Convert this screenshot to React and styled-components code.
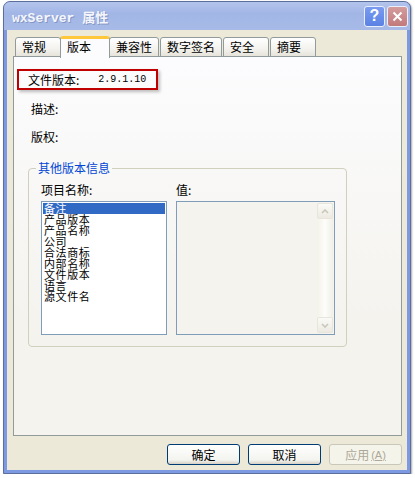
import React from 'react'
import styled, { createGlobalStyle } from 'styled-components'

const Global = createGlobalStyle`
  body {
    margin: 0;
    background: #ffffff;
    font-family: "Noto Sans CJK SC", "Liberation Sans", sans-serif;
    font-size: 12px;
  }
`

const Janela = styled.div`
  box-sizing: border-box;
  margin: 1px 0 0 3px;
  width: 408px;
  height: 473px;
  display: flex;
  flex-direction: column;
  background: #7d99e1;
  border: 1px solid #5c6f9c;
  border-radius: 7px 7px 0 0;
  padding: 0 3px 3px 3px;
  box-shadow: 1px 1px 2px rgba(0, 0, 0, 0.35);
`

const BarraTitulo = styled.div`
  height: 28px;
  display: flex;
  align-items: center;
  background: linear-gradient(#b3c4ec, #a2b6e6 40%, #a7bae7);
  border-radius: 6px 6px 0 0;
  margin: 0 -3px;
  padding-left: 8px;
  padding-right: 2px;
`

const Titulo = styled.div`
  flex-grow: 1;
  color: #f4f6fc;
  font-family: "Liberation Mono", "Noto Sans CJK SC", monospace;
  font-weight: bold;
  font-size: 13px;
  text-shadow: 1px 1px 0 #8496c4;
`

const BotaoTitulo = styled.div`
  box-sizing: border-box;
  width: 21px;
  height: 21px;
  margin-left: 2px;
  border: 1px solid #e8eefc;
  border-radius: 3px;
  display: flex;
  align-items: center;
  justify-content: center;
  color: #fff;
  font-family: "Liberation Sans", sans-serif;
  font-weight: bold;
  font-size: 16px;
  background: ${p => p.fechar
    ? 'linear-gradient(#d49c9c, #c27a7c)'
    : 'linear-gradient(#7a9bf0, #5a82e4)'};
`

const Corpo = styled.div`
  flex-grow: 1;
  background: #ece9d8;
  display: flex;
  flex-direction: column;
  padding: 6px 5px 0 6px;
`

const LinhaAbas = styled.div`
  display: flex;
  align-items: flex-end;
  height: 21px;
  padding-left: 2px;
  position: relative;
  z-index: 2;
`

const Aba = styled.div`
  box-sizing: border-box;
  min-width: ${p => (p.ativa ? '50px' : '46px')};
  padding: 0 6px;
  height: ${p => (p.ativa ? '22px' : '20px')};
  margin: ${p => (p.ativa ? '0 -1px 0 -2px' : '0 1px 0 0')};
  margin-bottom: ${p => (p.ativa ? '-1px' : '0')};
  border: 1px solid #919b9c;
  border-bottom: ${p => (p.ativa ? 'none' : '1px solid #919b9c')};
  border-top: ${p => (p.ativa ? '3px solid #ffc83c' : '1px solid #919b9c')};
  border-radius: 3px 3px 0 0;
  background: ${p => (p.ativa ? '#fcfcfe' : 'linear-gradient(#ffffff, #f3f2ee 60%, #e6e4da)')};
  color: #000;
  line-height: ${p => (p.ativa ? '16px' : '17px')};
  text-align: left;
  position: relative;
  z-index: ${p => (p.ativa ? 3 : 1)};
`

const Painel = styled.div`
  box-sizing: border-box;
  height: 380px;
  border: 1px solid #919b9c;
  background: linear-gradient(#fcfcfe, #f4f3ee 70%);
  padding: 12px 0 0 3px;
  display: flex;
  flex-direction: column;
  margin-top: -1px;
`

const CaixaVermelha = styled.div`
  box-sizing: border-box;
  width: 141px;
  height: 21px;
  border: 2px solid #c00000;
  box-shadow: 2px 2px 3px rgba(0, 0, 0, 0.25);
  display: flex;
  align-items: center;
  padding-left: 9px;
`

const Valor = styled.span`
  font-family: "Liberation Mono", monospace;
  font-size: 10px;
  margin-left: 19px;
`

const Rotulo = styled.div`
  margin-left: 14px;
  margin-top: ${p => p.topo}px;
  line-height: 14px;
`

const Grupo = styled.fieldset`
  box-sizing: border-box;
  margin: 17px 0 0 11px;
  width: 318px;
  height: 186px;
  border: 1px solid #d0d0bf;
  border-radius: 4px;
  padding: 0 11px 11px 12px;
  display: flex;
  flex-direction: column;
`

const Legenda = styled.legend`
  color: #0046d5;
  padding: 0 2px;
  margin-left: -5px;
  line-height: 14px;
`

const Cabecalhos = styled.div`
  display: flex;
  gap: 9px;
  margin-top: 8px;
  line-height: 14px;
`

const Cabecalho = styled.div`
  width: ${p => p.largura}px;
`

const Listas = styled.div`
  display: flex;
  gap: 9px;
  margin-top: 4px;
`

const Lista = styled.div`
  box-sizing: border-box;
  width: 126px;
  height: 134px;
  border: 1px solid #7f9db9;
  background: #fff;
  padding: 1px;
  display: flex;
  flex-direction: column;
`

const Item = styled.div`
  height: 11px;
  line-height: 11px;
  font-size: 11px;
  letter-spacing: 0.6px;
  padding-left: 1px;
  white-space: nowrap;
  background: ${p => (p.selecionado ? '#316ac5' : 'transparent')};
  color: ${p => (p.selecionado ? '#fff' : '#000')};
`

const CaixaValor = styled.div`
  box-sizing: border-box;
  width: 159px;
  height: 134px;
  border: 1px solid #7f9db9;
  background: #f4f3ee;
  display: flex;
  justify-content: flex-end;
  padding: 1px;
`

const Rolagem = styled.div`
  width: 16px;
  display: flex;
  flex-direction: column;
  justify-content: space-between;
  background: linear-gradient(90deg, #f3f1ea, #fdfdfa 50%, #f0efe7);
`

const BotaoRolagem = styled.div`
  box-sizing: border-box;
  width: 16px;
  height: 16px;
  border: 1px solid #e8e6dc;
  border-radius: 2px;
  background: linear-gradient(#fafaf6, #eceae1);
  display: flex;
  align-items: center;
  justify-content: center;
`

const Rodape = styled.div`
  display: flex;
  justify-content: flex-end;
  gap: 8px;
  padding-top: 8px;
`

const Botao = styled.div`
  box-sizing: border-box;
  width: 73px;
  height: 21px;
  border: 1px solid ${p => (p.desativado ? '#c9c7ba' : '#003c74')};
  border-radius: 3px;
  background: ${p => (p.desativado ? '#f5f4ea' : 'linear-gradient(#ffffff, #f3f3ef 80%, #d6d0c5)')};
  color: ${p => (p.desativado ? '#aca899' : '#000')};
  display: flex;
  align-items: center;
  justify-content: center;
  line-height: 14px;
`

const Sublinhado = styled.span`
  text-decoration: underline;
  font-family: "Liberation Sans", sans-serif;
  font-size: 11px;
  margin-left: 2px;
`

const itens = ['备注', '产品版本', '产品名称', '公司', '合法商标', '内部名称', '文件版本', '语言', '源文件名']
const abas = ['常规', '版本', '兼容性', '数字签名', '安全', '摘要']

const Seta = ({ baixo }) => (
  <svg width="8" height="5" viewBox="0 0 8 5">
    <path d={baixo ? 'M1 1 L4 4 L7 1' : 'M1 4 L4 1 L7 4'} fill="none" stroke="#c9c7ba" strokeWidth="1.6" />
  </svg>
)

export default function App() {
  return (
    <>
      <Global />
      <Janela>
        <BarraTitulo>
          <Titulo>wxServer 属性</Titulo>
          <BotaoTitulo>?</BotaoTitulo>
          <BotaoTitulo fechar>
            <svg width="11" height="11" viewBox="0 0 11 11">
              <path d="M1.5 1.5 L9.5 9.5 M9.5 1.5 L1.5 9.5" stroke="#fff" strokeWidth="2" />
            </svg>
          </BotaoTitulo>
        </BarraTitulo>
        <Corpo>
          <LinhaAbas>
            {abas.map((a) => (
              <Aba key={a} ativa={a === '版本'}>{a}</Aba>
            ))}
          </LinhaAbas>
          <Painel>
            <CaixaVermelha>
              文件版本:<Valor>2.9.1.10</Valor>
            </CaixaVermelha>
            <Rotulo topo={12}>描述:</Rotulo>
            <Rotulo topo={14}>版权:</Rotulo>
            <Grupo>
              <Legenda>其他版本信息</Legenda>
              <Cabecalhos>
                <Cabecalho largura={126}>项目名称:</Cabecalho>
                <Cabecalho largura={159}>值:</Cabecalho>
              </Cabecalhos>
              <Listas>
                <Lista>
                  {itens.map((i, indice) => (
                    <Item key={i} selecionado={indice === 0}>{i}</Item>
                  ))}
                </Lista>
                <CaixaValor>
                  <Rolagem>
                    <BotaoRolagem><Seta /></BotaoRolagem>
                    <BotaoRolagem><Seta baixo /></BotaoRolagem>
                  </Rolagem>
                </CaixaValor>
              </Listas>
            </Grupo>
          </Painel>
          <Rodape>
            <Botao>确定</Botao>
            <Botao>取消</Botao>
            <Botao desativado>应用<Sublinhado>(A)</Sublinhado></Botao>
          </Rodape>
        </Corpo>
      </Janela>
    </>
  )
}
